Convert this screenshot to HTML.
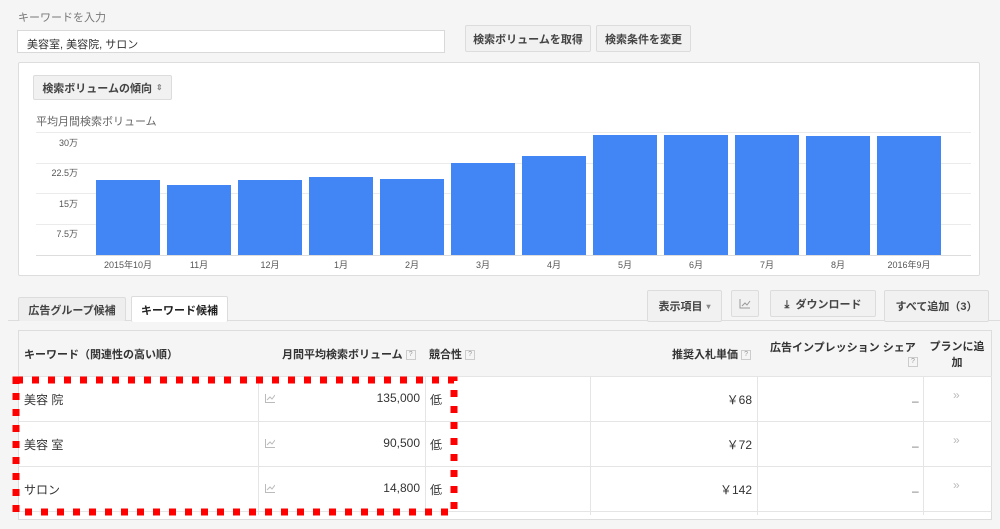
<!DOCTYPE html>
<html><head><meta charset="utf-8"><style>
*{margin:0;padding:0;box-sizing:border-box}
body{width:1000px;height:529px;background:#f5f5f5;font-family:"Liberation Sans","Noto Sans CJK JP",sans-serif;color:#333;position:relative;overflow:hidden;font-size:11px}
.a{position:absolute}
.btn{position:absolute;background:#f1f1f1;border:1px solid #dcdcdc;border-radius:2px;font-weight:bold;font-size:11px;color:#444;display:flex;align-items:center;justify-content:center}
.grid{position:absolute;left:36px;width:935px;height:1px;background:#ebebeb}
.yl{position:absolute;width:42px;left:36px;text-align:right;font-size:9px;color:#555}
.bar{position:absolute;width:64px;background:#4285f4}
.ml{position:absolute;width:90px;text-align:center;font-size:9px;color:#555;top:258px}
.q{display:inline-block;width:10px;height:10px;border:1px solid #ccc;font-size:7px;color:#999;text-align:center;line-height:8px;font-weight:normal;vertical-align:middle}
.vl{position:absolute;width:1px;background:#e5e5e5;top:376px;height:139px}
.hl{position:absolute;left:18px;width:974px;height:1px;background:#e5e5e5}
.t{position:absolute;font-size:12px;color:#333}
.ic{position:absolute}
</style></head><body>
<div class="a" style="left:18px;top:9px;color:#777;font-size:11px">キーワードを入力</div>
<div class="a" style="left:17px;top:30px;width:428px;height:23px;background:#fff;border:1px solid #d9d9d9;padding:5px 9px;font-size:11px">美容室, 美容院, サロン</div>
<div class="btn" style="left:465px;top:25px;width:126px;height:27px">検索ボリュームを取得</div>
<div class="btn" style="left:596px;top:25px;width:95px;height:27px">検索条件を変更</div>

<div class="a" style="left:18px;top:62px;width:962px;height:214px;background:#fff;border:1px solid #ddd;border-radius:2px"></div>
<div class="btn" style="left:33px;top:75px;width:139px;height:25px">検索ボリュームの傾向 <span style="color:#888;font-size:8px;margin-left:4px">⇕</span></div>
<div class="a" style="left:36px;top:113px;color:#666;font-size:11px">平均月間検索ボリューム</div>
<div class="grid" style="top:132px"></div><div class="grid" style="top:163px"></div><div class="grid" style="top:193px"></div><div class="grid" style="top:224px"></div><div class="grid" style="top:255px;background:#ddd"></div>
<div class="yl" style="top:136px">30万</div><div class="yl" style="top:166px">22.5万</div><div class="yl" style="top:197px">15万</div><div class="yl" style="top:227px">7.5万</div>
<div class="bar" style="left:96px;top:180px;height:75px"></div>
<div class="bar" style="left:167px;top:185px;height:70px"></div>
<div class="bar" style="left:238px;top:180px;height:75px"></div>
<div class="bar" style="left:309px;top:177px;height:78px"></div>
<div class="bar" style="left:380px;top:179px;height:76px"></div>
<div class="bar" style="left:451px;top:163px;height:92px"></div>
<div class="bar" style="left:522px;top:156px;height:99px"></div>
<div class="bar" style="left:593px;top:135px;height:120px"></div>
<div class="bar" style="left:664px;top:135px;height:120px"></div>
<div class="bar" style="left:735px;top:135px;height:120px"></div>
<div class="bar" style="left:806px;top:136px;height:119px"></div>
<div class="bar" style="left:877px;top:136px;height:119px"></div>
<div class="ml" style="left:83px">2015年10月</div><div class="ml" style="left:154px">11月</div><div class="ml" style="left:225px">12月</div><div class="ml" style="left:296px">1月</div><div class="ml" style="left:367px">2月</div><div class="ml" style="left:438px">3月</div><div class="ml" style="left:509px">4月</div><div class="ml" style="left:580px">5月</div><div class="ml" style="left:651px">6月</div><div class="ml" style="left:722px">7月</div><div class="ml" style="left:793px">8月</div><div class="ml" style="left:864px">2016年9月</div>

<div class="a" style="left:8px;top:320px;width:992px;height:1px;background:#ddd"></div>
<div class="btn" style="left:18px;top:297px;width:108px;height:24px;border-bottom:none;background:#eee">広告グループ候補</div>
<div class="btn" style="left:131px;top:296px;width:97px;height:26px;border-bottom:none;background:#fff;color:#222">キーワード候補</div>
<div class="btn" style="left:647px;top:290px;width:75px;height:32px">表示項目 <span style="color:#888;font-size:8px;margin-left:4px">▾</span></div>
<div class="btn" style="left:731px;top:290px;width:28px;height:27px"><svg width="12" height="10"><path d="M1 0V9H11M3 7L6 4L8 6L11 2" stroke="#999" fill="none"/></svg></div>
<div class="btn" style="left:770px;top:290px;width:106px;height:27px">⤓&nbsp; ダウンロード</div>
<div class="btn" style="left:884px;top:290px;width:105px;height:32px">すべて追加（3）</div>

<div class="a" style="left:18px;top:330px;width:974px;height:190px;background:#fff;border:1px solid #ddd"></div>
<div class="a" style="left:19px;top:331px;width:972px;height:45px;background:#f5f5f5"></div>
<div class="t" style="left:24px;top:346px;font-weight:bold;font-size:11px">キーワード（関連性の高い順）</div>
<div class="t" style="left:282px;top:346px;font-weight:bold;font-size:11px">月間平均検索ボリューム <span class="q">?</span></div>
<div class="t" style="left:429px;top:346px;font-weight:bold;font-size:11px">競合性 <span class="q">?</span></div>
<div class="t" style="left:672px;top:346px;font-weight:bold;font-size:11px">推奨入札単価 <span class="q">?</span></div>
<div class="t" style="left:770px;top:339px;font-weight:bold;font-size:11px">広告インプレッション シェア</div>
<div class="a" style="left:908px;top:356px"><span class="q">?</span></div>
<div class="t" style="left:928px;top:339px;font-weight:bold;font-size:11px;width:58px;text-align:center;line-height:16px">プランに追加</div>
<div class="hl" style="top:376px"></div><div class="hl" style="top:421px"></div><div class="hl" style="top:466px"></div><div class="hl" style="top:511px"></div>
<div class="vl" style="left:258px"></div><div class="vl" style="left:425px"></div><div class="vl" style="left:590px"></div><div class="vl" style="left:757px"></div><div class="vl" style="left:923px"></div>

<div class="t" style="left:24px;top:391px">美容 院</div><svg class="ic" style="left:265px;top:394px" width="10" height="9"><path d="M0.5 0V8.5H10M2 6L5 3L7 5L10 1" stroke="#bbb" fill="none"/></svg><div class="t" style="left:340px;top:391px;width:80px;text-align:right">135,000</div><div class="t" style="left:430px;top:391px">低</div><div class="t" style="left:700px;top:391px;width:52px;text-align:right">￥68</div><div class="t" style="left:912px;top:394px;color:#777">–</div><div class="t" style="left:953px;top:388px;color:#bbb">»</div>
<div class="t" style="left:24px;top:436px">美容 室</div><svg class="ic" style="left:265px;top:439px" width="10" height="9"><path d="M0.5 0V8.5H10M2 6L5 3L7 5L10 1" stroke="#bbb" fill="none"/></svg><div class="t" style="left:340px;top:436px;width:80px;text-align:right">90,500</div><div class="t" style="left:430px;top:436px">低</div><div class="t" style="left:700px;top:436px;width:52px;text-align:right">￥72</div><div class="t" style="left:912px;top:439px;color:#777">–</div><div class="t" style="left:953px;top:433px;color:#bbb">»</div>
<div class="t" style="left:24px;top:481px">サロン</div><svg class="ic" style="left:265px;top:484px" width="10" height="9"><path d="M0.5 0V8.5H10M2 6L5 3L7 5L10 1" stroke="#bbb" fill="none"/></svg><div class="t" style="left:340px;top:481px;width:80px;text-align:right">14,800</div><div class="t" style="left:430px;top:481px">低</div><div class="t" style="left:700px;top:481px;width:52px;text-align:right">￥142</div><div class="t" style="left:912px;top:484px;color:#777">–</div><div class="t" style="left:953px;top:478px;color:#bbb">»</div>

<svg class="a" style="left:0;top:0" width="1000" height="529"><rect x="16" y="380" width="438" height="132" fill="none" stroke="#f00" stroke-width="7" stroke-dasharray="7 9"/></svg>
</body></html>
